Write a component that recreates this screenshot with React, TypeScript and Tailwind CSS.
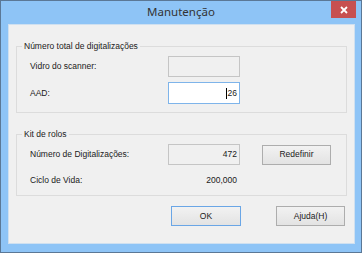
import React from 'react';

function TextBox({ value, focused, className = '' }: { value?: string; focused?: boolean; className?: string }) {
  return (
    <div
      className={
        'w-[72px] flex items-center justify-end pr-[2px] border ' +
        (focused ? 'bg-white border-[#7eb4ea]' : 'bg-[#f0f0f0] border-[#c5c5c5]') +
        ' ' +
        className
      }
    >
      {focused && <span className="w-px h-[11px] bg-black mr-px" />}
      {value && <span>{value}</span>}
    </div>
  );
}

function Button({ label, isDefault }: { label: string; isDefault?: boolean }) {
  return (
    <button
      className={
        'h-[20px] flex items-center justify-center border bg-gradient-to-b from-[#f2f2f2] to-[#e3e3e3] ' +
        (isDefault ? 'w-[70px] border-[#6aa6e6]' : 'w-[69px] border-[#adadad]')
      }
    >
      {label}
    </button>
  );
}

function GroupBox({ title, children, className = '' }: { title: string; children: React.ReactNode; className?: string }) {
  return (
    <div className={'relative border border-[#dcdcdc] pl-[13px] ' + className}>
      <span className="absolute left-[5px] top-[-6px] px-[2px] bg-[#f0f0f0] leading-[11px]">{title}</span>
      {children}
    </div>
  );
}

function CloseButton() {
  return (
    <div className="absolute right-[5px] top-0 w-[25px] h-[17px] flex items-center justify-center bg-[#c75050]">
      <svg width="8" height="8" viewBox="0 0 8 8">
        <path d="M1 1L7 7M7 1L1 7" stroke="#ffffff" strokeWidth="1.8" />
      </svg>
    </div>
  );
}

export default function App() {
  return (
    <div className="w-[362px] h-[253px] bg-[#8ec4f6] border border-[#5b7896]">
      <div className="h-full flex flex-col font-['Liberation_Sans',Arial,sans-serif] text-[8.5px] text-[#1a1a1a]">
        {/* title bar */}
        <div className="relative h-[23px] flex items-center justify-center">
          <span className="font-['Noto_Sans',sans-serif] text-[11.5px] text-[#333] pb-[1px]">Manutenção</span>
          <CloseButton />
        </div>

        {/* client area */}
        <div className="flex-1 ml-[7px] mr-[6px] mb-[8px] bg-[#f0f0f0] border border-[#cfe0f0] flex flex-col pl-[7px] pr-[7px]">
          <GroupBox title="Número total de digitalizações" className="mt-[21px] pt-[9px] pb-[8px]">
            <div className="flex flex-col gap-[5px]">
              <div className="flex h-[21px] items-center">
                <span className="w-[138px]">Vidro do scanner:</span>
                <TextBox className="h-[21px]" />
              </div>
              <div className="flex h-[22px] items-center">
                <span className="w-[138px]">AAD:</span>
                <TextBox className="h-[22px]" value="26" focused />
              </div>
            </div>
          </GroupBox>

          <GroupBox title="Kit de rolos" className="mt-[21px] pt-[9px] pb-[4px]">
            <div className="flex flex-col gap-[5px]">
              <div className="flex h-[21px] items-center">
                <span className="w-[138px]">Número de Digitalizações:</span>
                <TextBox className="h-[21px]" value="472" />
                <div className="ml-[22px]">
                  <Button label="Redefinir" />
                </div>
              </div>
              <div className="flex h-[21px] items-center">
                <span className="w-[138px]">Ciclo de Vida:</span>
                <span className="w-[72px] text-right pr-[3px]">200,000</span>
              </div>
            </div>
          </GroupBox>

          <div className="flex justify-end gap-[35px] mt-[10px] pr-[2px]">
            <Button label="OK" isDefault />
            <Button label="Ajuda(H)" />
          </div>
        </div>
      </div>
    </div>
  );
}
